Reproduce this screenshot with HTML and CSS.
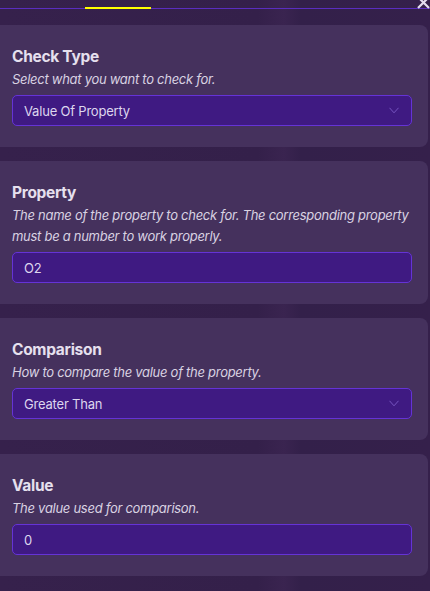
FILE: index.html
```html
<!DOCTYPE html>
<html>
<head>
<meta charset="utf-8">
<link rel="stylesheet" href="styles.css">
</head>
<body>
<div class="page">
  <div class="tabbar">
    <div class="tab-active"></div>
    <svg class="close" width="16" height="14" viewBox="0 0 16 14"><path d="M2 -3 L13 8 M13 -3 L2 8" stroke="#e4dcef" stroke-width="2.2" fill="none"/></svg>
  </div>

  <section class="card">
    <h2 class="title">Check Type</h2>
    <p class="desc">Select what you want to check for.</p>
    <div class="field select">
      <span>Value Of Property</span>
      <svg class="chev" width="10" height="7" viewBox="0 0 10 7"><path d="M0.5 0.8 L5 5.8 L9.5 0.8" stroke="#7655c0" stroke-width="1" fill="none"/></svg>
    </div>
  </section>

  <section class="card">
    <h2 class="title">Property</h2>
    <p class="desc">The name of the property to check for. The corresponding property must be a number to work properly.</p>
    <div class="field"><span>O2</span></div>
  </section>

  <section class="card">
    <h2 class="title">Comparison</h2>
    <p class="desc">How to compare the value of the property.</p>
    <div class="field select">
      <span>Greater Than</span>
      <svg class="chev" width="10" height="7" viewBox="0 0 10 7"><path d="M0.5 0.8 L5 5.8 L9.5 0.8" stroke="#7655c0" stroke-width="1" fill="none"/></svg>
    </div>
  </section>

  <section class="card">
    <h2 class="title">Value</h2>
    <p class="desc">The value used for comparison.</p>
    <div class="field"><span>0</span></div>
  </section>
</div>
</body>
</html>
```

FILE: styles.css
```css
html, body {
  margin: 0;
  padding: 0;
}
body {
  background: #35204b;
  font-family: Inter, "Noto Sans", sans-serif;
  width: 430px;
  height: 591px;
  overflow: hidden;
}
.page {
  position: relative;
  display: flex;
  flex-direction: column;
  gap: 14px;
  background: linear-gradient(90deg, #36214c 0%, #34204a 60%, #3a2450 66%, #33204a 70%, #35204b 100%);
  min-height: 591px;
}
.tabbar {
  position: relative;
  height: 11px;
}
.tabbar::before {
  content: "";
  display: block;
  height: 8px;
  border-bottom: 1px solid #5a2dc0;
}
.tab-active {
  position: absolute;
  left: 85px;
  top: 7px;
  width: 66px;
  height: 2px;
  background: #ffff00;
}
.close {
  position: absolute;
  right: -2px;
  top: 0;
}
.card {
  width: 416px;
  margin-right: 2px;
  padding: 20px 0 21px 12px;
  background: #45315d;
  border-radius: 0 8px 8px 0;
}
.title {
  margin: 0;
  font-size: 15.5px;
  line-height: 24px;
  font-weight: 700;
  color: #e6e0ee;
  letter-spacing: -0.3px;
}
.desc {
  margin: 0 0 5px 0;
  font-size: 13px;
  line-height: 21px;
  font-style: italic;
  color: #d9d2e2;
  padding-right: 4px;
  letter-spacing: -0.28px;
}
.field {
  box-sizing: border-box;
  width: 400px;
  height: 31px;
  display: flex;
  align-items: center;
  justify-content: space-between;
  padding: 0 12px 0 11px;
  background: #3f1a82;
  border: 1px solid #6533d6;
  border-radius: 5px;
  font-size: 13px;
  color: #ddd6ee;
  letter-spacing: -0.2px;
}
.chev {
  display: block;
}
```
